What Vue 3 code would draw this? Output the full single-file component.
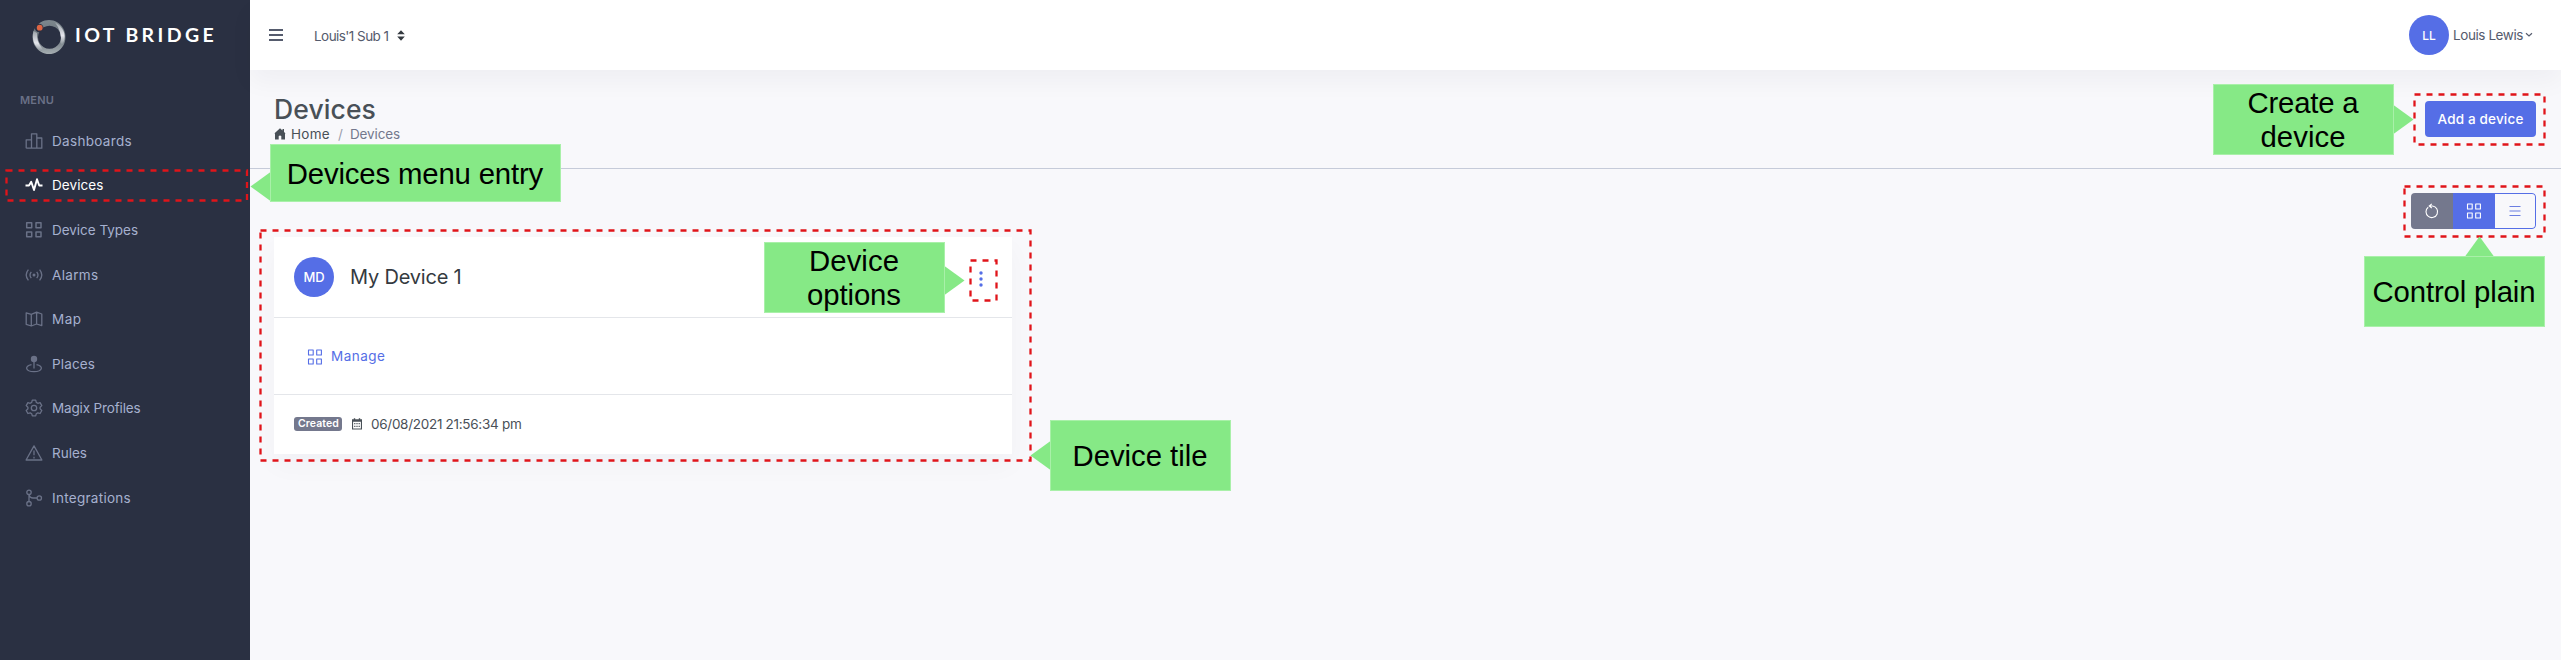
<script setup>
const vFit = { mounted: fit, updated: fit }

// Spreads the letters so that a label fills the given width.
function fit(el, { value }) {
  el.style.letterSpacing = '0px'
  const natural = el.getBoundingClientRect().width
  el.style.letterSpacing = `${(value - natural) / el.textContent.length}px`
}

const menu = [
  { icon: 'bars', label: 'Dashboards', w: 80 },
  { icon: 'pulse', label: 'Devices', w: 51.5, active: true },
  { icon: 'grid', label: 'Device Types', w: 86 },
  { icon: 'signal', label: 'Alarms', w: 46.5 },
  { icon: 'map', label: 'Map', w: 29.5 },
  { icon: 'place', label: 'Places', w: 43 },
  { icon: 'gear', label: 'Magix Profiles', w: 88.5 },
  { icon: 'warn', label: 'Rules', w: 35 },
  { icon: 'branch', label: 'Integrations', w: 79 },
]

const frames = [
  [6.5, 170.5, 240.5, 30],
  [260.5, 230.5, 770, 230],
  [970.5, 260.5, 26, 40],
  [2414.5, 94.5, 130, 50],
  [2404.5, 186.5, 140, 50],
]

const callouts = [
  { box: [270.5, 144.5, 290, 57], tip: '270.5,172 250.5,186.5 270.5,201', lines: [['Devices menu entry', 415, 183.5, 256.5]] },
  { box: [764.5, 242.5, 180, 70], tip: '944.5,266 964.5,280.5 944.5,295', lines: [['Device', 854, 271, 90], ['options', 854, 304.5, 94]] },
  { box: [1050.5, 420.5, 180, 70], tip: '1050.5,441 1030.5,455.5 1050.5,470', lines: [['Device tile', 1140, 466, 135]] },
  { box: [2213.5, 84.5, 180, 70], tip: '2393.5,105 2413.5,119.5 2393.5,134', lines: [['Create a', 2303, 112.5, 111], ['device', 2303, 146.5, 85]] },
  { box: [2364.5, 256.5, 180, 70], tip: '2465,256.5 2479.5,236.5 2494,256.5', lines: [['Control plain', 2454, 302, 163]] },
]
</script>

<template>
  <div class="page">
    <aside class="sidebar">
      <div class="brand">
        <svg class="ring" width="36" height="36" viewBox="0 0 36 36">
          <defs>
            <linearGradient id="steel" x1="0" y1="0" x2="0" y2="1">
              <stop offset="0" stop-color="#7d878d" />
              <stop offset=".5" stop-color="#6a747c" />
              <stop offset="1" stop-color="#a5adb1" />
            </linearGradient>
            <linearGradient id="shine" x1="0" y1="0" x2="0" y2="1">
              <stop offset="0" stop-color="#9aa2a8" />
              <stop offset=".6" stop-color="#e6e7ee" />
              <stop offset="1" stop-color="#8b949a" />
            </linearGradient>
          </defs>
          <path fill="url(#steel)" fill-rule="evenodd" d="M18 1a16.500 17 0 1 0 .01 0zM18.500 6.800a11.500 11.500 0 1 1-.01 0z" />
          <path d="M24 3.500C32 7 36 16 32.500 23.500Q31 26.500 29.500 24Q31.500 13 24 3.500z" fill="url(#shine)" />
          <path d="M2.500 12C.5 20 3 28 10.500 32Q12.500 31 10.500 28.500Q5.500 22 6 14z" fill="url(#shine)" />
          <circle cx="8.200" cy="9" r="4.300" fill="#2a3042" />
          <circle cx="8.700" cy="8.700" r="2.900" fill="#de6543" />
        </svg>
        <span v-fit="142" class="wordmark">IOT BRIDGE</span>
      </div>
      <div class="menu-title"><span v-fit="34">MENU</span></div>
      <nav>
        <a v-for="m in menu" :key="m.label" class="item" :class="{ active: m.active }">
          <svg class="ico" width="18" height="18" viewBox="0 0 18 18">
            <path v-if="m.icon === 'bars'" d="M1.200 16.200V7.800H6.500M1.200 16.200H16.800V6H11.800M6.500 16V1.800H11.800V16" />
            <path v-else-if="m.icon === 'pulse'" stroke-width="1.900" d="M.5 9.500H4L6.200 5.800L9 14L12 3.200L14.200 9.500H17.500" />
            <path v-else-if="m.icon === 'grid'" stroke-width="1.500" d="M1.700 1.700h5v5h-5zM11 1.700h5v5h-5zM1.700 11h5v4.800h-5zM11 11h5v4.800h-5z" />
            <g v-else-if="m.icon === 'signal'">
              <circle cx="9" cy="9" r="1.500" class="solid" />
              <path d="M6.300 5.800q-2.600 3.200 0 6.400M11.700 5.800q2.600 3.200 0 6.400M3.400 3.700q-4.400 5.300 0 10.600M14.600 3.700q4.400 5.300 0 10.600" />
            </g>
            <path v-else-if="m.icon === 'map'" d="M1.200 2.800L6.300 4.300L11.600 2.200L16.800 4V15.600L11.600 14L6.300 16L1.200 14.300ZM6.300 4.300V16M11.600 2.200V14" />
            <g v-else-if="m.icon === 'place'">
              <circle cx="9" cy="4" r="3.200" class="solid" />
              <path d="M9 6V13.500M6.500 9.700C-.8 11 .2 16.700 9 16.700S18.800 11 11.500 9.700" />
            </g>
            <g v-else-if="m.icon === 'gear'">
              <circle cx="9" cy="9" r="2.700" />
              <path d="M7.300 1.200h3.400l.6 2.200 1.500.9 2.300-.7 1.700 3-1.700 1.600v1.700l1.700 1.600-1.700 3-2.300-.7-1.500.9-.6 2.200H7.300l-.6-2.200-1.500-.9-2.300.7-1.700-3 1.700-1.600V8.200L1.200 6.600l1.700-3 2.300.7 1.500-.9z" />
            </g>
            <path v-else-if="m.icon === 'warn'" d="M9 1.900L16.900 16H1.100ZM9 6.500V11.300M9 12.800V14.400" />
            <g v-else>
              <circle cx="4" cy="3.300" r="2.200" />
              <circle cx="4" cy="14.700" r="2.200" />
              <circle cx="14.300" cy="9" r="2.200" />
              <path d="M4 5.500V12.500M4 6Q5 9 8 9H12" />
            </g>
          </svg>
          <span v-fit="m.w">{{ m.label }}</span>
        </a>
      </nav>
    </aside>

    <main class="main">
      <header class="topbar">
        <svg class="burger" width="14" height="14" viewBox="0 0 14 14"><path d="M0 2h14M0 7h14M0 12h14" stroke="#555b6d" stroke-width="1.800" /></svg>
        <span v-fit="74.5" class="tenant">Louis'1 Sub 1</span>
        <svg class="sort" width="8" height="11" viewBox="0 0 8 11"><path d="M4 .3L7.800 4.300H.2zM4 10.700L7.800 6.500H.2z" fill="#343a40" /></svg>
        <div class="avatar user">LL</div>
        <span v-fit="70" class="username">Louis Lewis</span>
        <svg class="chev" width="8" height="6" viewBox="0 0 8 6"><path d="M1 1.200L4 4L7 1.200" fill="none" stroke="#555b6d" stroke-width="1.200" /></svg>
      </header>

      <section class="heading">
        <div>
          <h1><span v-fit="102">Devices</span></h1>
          <div class="crumbs">
            <svg width="12" height="12" viewBox="0 0 12 12"><path d="M6 .3L8.500 2.500V1H10V3.900L11.700 5.600H11V11.500H7.300V8Q6 6.800 4.700 8V11.500H1V5.600H.3z" fill="#495057" /></svg>
            <span v-fit="39" class="home">Home</span>
            <span class="slash">/</span>
            <span v-fit="50">Devices</span>
          </div>
        </div>
        <button class="add"><span v-fit="86">Add a device</span></button>
      </section>

      <div class="tools">
        <div class="group">
          <div class="seg grey"><svg width="16" height="16" viewBox="0 0 16 16"><path d="M4.200 4.200A5.800 5.800 0 1 0 8.500 3H5.500M7.800 .8L5.200 3L7.800 5" fill="none" stroke="#fff" stroke-width="1.100" /></svg></div>
          <div class="seg blue"><svg width="16" height="16" viewBox="0 0 16 16"><path d="M1.500 1h4.700v5H1.500zM9.700 1h4.700v5H9.700zM1.500 10h4.700v5H1.500zM9.700 10h4.700v5H9.700z" fill="none" stroke="#fff" stroke-width="1.100" stroke-linejoin="round" /></svg></div>
          <div class="seg list"><svg width="12" height="12" viewBox="0 0 12 12"><path d="M.5 1.500h11M.5 6h11M.5 10.500h11" stroke="#6b7ee2" stroke-width="1.100" /></svg></div>
        </div>
      </div>

      <article class="card">
        <div class="card-head">
          <div class="avatar">MD</div>
          <span v-fit="111.500" class="name">My Device 1</span>
          <svg class="dots" width="4" height="16" viewBox="0 0 4 16" fill="#556ee6"><circle cx="2" cy="2" r="1.700" /><circle cx="2" cy="8" r="1.700" /><circle cx="2" cy="14" r="1.700" /></svg>
        </div>
        <div class="card-body">
          <svg width="16" height="16" viewBox="0 0 16 16"><path d="M1.500 1h4.700v5H1.500zM9.700 1h4.700v5H9.700zM1.500 10h4.700v5H1.500zM9.700 10h4.700v5H9.700z" fill="none" stroke="#556ee6" stroke-width="1.100" stroke-linejoin="round" /></svg>
          <span v-fit="54.500">Manage</span>
        </div>
        <div class="card-foot">
          <span class="badge"><span v-fit="41">Created</span></span>
          <svg width="10" height="12" viewBox="0 0 10 12"><path fill="#495057" fill-rule="evenodd" d="M0 1.300H1.800V.3H3.200V1.300H6.800V.3H8.200V1.300H10V11.500H0zM1.100 3.800V10.400H8.900V3.800z" /><path d="M2.200 5.700H7.800M2.200 8.300H7.800" stroke="#495057" stroke-width="1.200" stroke-dasharray="1.200 1" /></svg>
          <span v-fit="150.500" class="date">06/08/2021 21:56:34 pm</span>
        </div>
      </article>
    </main>

    <svg class="notes" width="2561" height="662" viewBox="0 0 2561 662">
      <rect v-for="f in frames" :key="f[0]" :x="f[0]" :y="f[1]" :width="f[2]" :height="f[3]" class="frame" />
      <g v-for="c in callouts" :key="c.tip">
        <polygon :points="c.tip" fill="#86e986" />
        <rect :x="c.box[0]" :y="c.box[1]" :width="c.box[2]" :height="c.box[3]" class="box" />
        <text v-for="l in c.lines" :key="l[0]" :x="l[1]" :y="l[2]" :textLength="l[3]" class="note">{{ l[0] }}</text>
      </g>
    </svg>
  </div>
</template>

<style>
body {
  background: #fff;
}
</style>

<style scoped>
.page {
  position: relative;
  display: flex;
  width: 2561px;
  height: 660px;
  overflow: hidden;
  font: 13.500px/20px Inter, "Open Sans", sans-serif;
  color: #495057;
  white-space: nowrap;
}
.page * { box-sizing: border-box; }
span { display: inline-block; }
svg { display: block; flex: none; }
.sidebar { width: 250px; flex: none; background: #2a3042; }
.brand { display: flex; align-items: center; height: 70px; padding: 4px 0 0 31px; }
.wordmark { margin-left: 8px; margin-top: -4px; font: 700 19.500px/24px Lato, sans-serif; color: #fff; }
.menu-title { height: 50px; padding: 20px 0 0 20px; margin-bottom: -1.500px; font-size: 11px; font-weight: 600; color: #6a7187; }
.item { display: flex; align-items: center; height: 44.600px; padding-left: 25px; color: #a6b0cf; }
.item span { margin-left: 9px; }
.ico { fill: none; stroke: #6a7187; stroke-width: 1.300; stroke-linejoin: round; }
.ico .solid { fill: #6a7187; stroke: none; }
.active { color: #fff; }
.active .ico { stroke: #fff; }
.main { flex: 1; background: #f8f8fb; }
.topbar {
  display: flex;
  align-items: center;
  height: 70px;
  padding: 0 28px 0 19px;
  background: #fff;
  box-shadow: 0 12px 24px rgba(18, 38, 63, .04);
  color: #555b6d;
}
.tenant { margin-left: 31px; margin-top: 1px; }
.sort { margin-left: 8px; }
.avatar {
  width: 40px;
  height: 40px;
  border-radius: 50%;
  background: #556ee6;
  color: #fff;
  font-size: 13px;
  font-weight: 500;
  line-height: 41px;
  text-align: center;
}
.user { margin-left: auto; font-size: 12px; }
.username { margin-left: 4px; margin-top: -1px; }
.chev { margin-left: 2px; }
.heading {
  display: flex;
  justify-content: space-between;
  height: 99px;
  padding: 31px 25px 0 24px;
  border-bottom: 1px solid #c6cbd9;
}
h1 { margin: -12px 0 0; height: 40px; font-size: 26.500px; font-weight: 500; line-height: 40px; }
h1 span { display: block; width: max-content; }
.crumbs { display: flex; align-items: center; height: 20px; margin-top: -5px; color: #74788d; }
.home { margin-left: 5px; color: #495057; }
.slash { width: 4px; margin: 0 8px; color: #9a9dac; }
.add { width: 111px; height: 36px; padding: 0; border: 0; border-radius: 4px; background: #556ee6; color: #fff; font: 500 13.500px/36px Inter, sans-serif; }
.tools { display: flex; justify-content: flex-end; height: 68px; padding: 24px 25px 0 0; }
.group { display: flex; width: 125px; height: 36px; border-radius: 4px; overflow: hidden; }
.seg { display: flex; align-items: center; justify-content: center; width: 42px; }
.grey { background: #74788d; }
.blue { background: #556ee6; }
.list { width: 41px; border: 1px solid #556ee6; border-left: 0; border-radius: 0 4px 4px 0; }
.card { width: 738px; height: 217px; margin-left: 24px; background: #fff; box-shadow: 0 12px 24px rgba(18, 38, 63, .03); }
.card-head { display: flex; align-items: center; height: 81px; padding: 0 29px 0 20px; border-bottom: 1px solid #e4e6ea; }
.name { margin-left: 16px; font-size: 20px; color: #343a40; }
.dots { margin-left: auto; margin-top: 3px; }
.card-body { display: flex; align-items: center; height: 77px; padding: 2px 0 0 33px; border-bottom: 1px solid #e4e6ea; color: #556ee6; }
.card-body span { margin-left: 8px; margin-top: -3px; }
.card-foot { display: flex; align-items: center; height: 59px; padding-left: 20px; }
.badge { width: 48px; height: 14px; margin-top: -1px; padding-left: 4px; border-radius: 3px; background: #74788d; color: #fff; font-size: 10.500px; font-weight: 600; line-height: 14px; }
.card-foot svg { margin-left: 10px; margin-top: -2px; }
.date { margin-left: 9px; margin-top: -1px; }
.notes { position: absolute; left: 0; top: 0; }
.frame { fill: none; stroke: #e0141a; stroke-width: 2.300; stroke-dasharray: 6 6; }
.box { fill: #86e986; stroke: #a9f0a9; stroke-width: 1; }
.note { font: 29.330px "Liberation Sans", Arial, sans-serif; fill: #000; text-anchor: middle; }
</style>
